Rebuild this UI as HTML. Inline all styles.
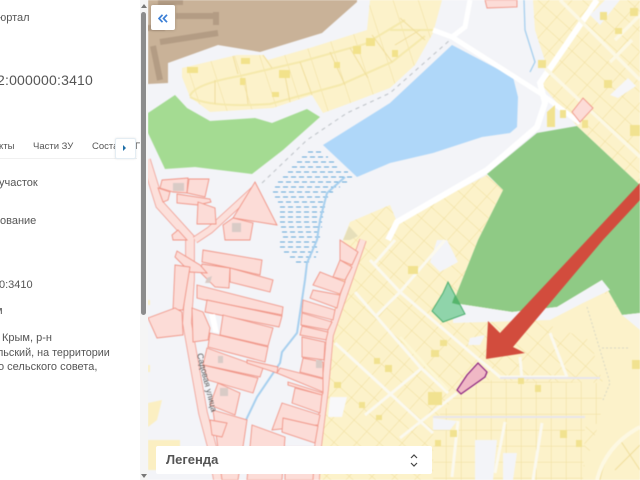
<!DOCTYPE html>
<html><head><meta charset="utf-8">
<style>
html,body{margin:0;padding:0;width:640px;height:480px;overflow:hidden;background:#fff;font-family:"Liberation Sans","Noto Sans CJK SC",sans-serif}
#map{position:absolute;left:0;top:0;filter:blur(.5px)}
#panel{position:absolute;left:0;top:0;width:140px;height:480px;background:#fff;overflow:hidden;filter:blur(.35px);color:#555}
.t{position:absolute;white-space:nowrap;font-size:11px;line-height:14px}
#sb{position:absolute;left:140px;top:0;width:8px;height:480px;background:#f5f5f5}
#th{position:absolute;left:141px;top:12px;width:5px;height:303px;background:#8c8c8c;border-radius:3px}
.ar{position:absolute;left:141px;width:0;height:0;border-left:3px solid transparent;border-right:3px solid transparent}
#back{position:absolute;left:151px;top:5px;width:24px;height:25px;background:#fff;box-shadow:0 0 3px rgba(0,0,0,.2);border-radius:2px}
#tabbtn{position:absolute;left:115px;top:138px;width:19px;height:19px;background:#fff;border:1px solid #e4edf3;border-radius:2px;box-shadow:0 0 2px rgba(0,0,0,.1)}
#leg{position:absolute;left:156px;top:446px;width:276px;height:28px;background:#fff;border-radius:2px;filter:blur(.3px)}
</style></head><body>
<svg id="map" width="640" height="480" viewBox="0 0 640 480" xmlns="http://www.w3.org/2000/svg">
<defs>
<pattern id="g1" width="17" height="15" patternUnits="userSpaceOnUse" patternTransform="rotate(42)"><rect width="17" height="15" fill="#fcf2ca"/><path d="M0 0H17M0 0V15" stroke="#f0de9d" stroke-width="1" fill="none"/></pattern>
<pattern id="g2" width="15" height="16" patternUnits="userSpaceOnUse" patternTransform="translate(461 398)"><rect width="15" height="16" fill="#fcf2ca"/><path d="M0 0H15M0 0V16" stroke="#f0de9d" stroke-width="1" fill="none"/></pattern>
<pattern id="g3" width="24" height="30" patternUnits="userSpaceOnUse" patternTransform="rotate(-18 200 80)"><rect width="24" height="30" fill="#fcf2ca"/><path d="M0 0V30" stroke="#f0de9d" stroke-width="1" fill="none"/></pattern>
</defs>
<rect width="640" height="480" fill="#f3f4f8"/>
<polygon points="148,0 357,0 357,2 322,33 260,52 218,45 168,63 168,83 148,84" fill="#c9b298"/>
<path d="M158 2H183M176 16H216M216 12V25M160 42L218 33M146 28H165M153 46L160 80" stroke="#b39c84" stroke-width="6" fill="none"/>
<polygon points="148,113 175,95 187,108 210,121 255,118 272,123 307,109 320,117 283,150 252,174 195,167 165,169 148,133" fill="#a4db92"/>
<polygon points="323,145 390,103 452,45 513,77 518,97 517,127 510,133 482,137 433,153 390,163 357,177" fill="#afd7f9"/>
<polygon points="487,174 537,133 577,126 640,185 640,313 622,315 602,280 557,307 512,312 453,303 458,290 478,240 503,190" fill="#8fca85"/>
<polygon points="182,68 237,55 263,55 268,60 313,47 367,30 370,0 442,0 433,33 415,65 390,88 345,105 323,113 312,95 273,108 210,112 190,97 182,77" fill="url(#g3)"/>
<path d="M190 96Q194 84 240 76L300 62L365 44L405 20M190 97Q210 108 270 104L340 85L392 62L425 36M390 30H433" stroke="#f5e9ac" stroke-width="2" fill="none"/>
<path d="M233 56L238 74M263 55L272 68M215 80V104M245 78L248 104M284 70L290 102M300 62L312 95M330 52L345 85M350 48L368 78M372 35L392 62M400 18L425 40M395 45L420 30" stroke="#f0de9d" stroke-width="1" fill="none"/>
<path d="M187 67H198V73H187ZM241 58H250V64H241ZM279 70H290V78H279ZM240 78H245V85H240ZM272 92H279V97H272ZM334 62H340V68H334ZM353 46H361V54H353ZM366 38H375V46H366ZM392 50H398V57H392Z" fill="#f2e28b"/>
<polygon points="533,0 640,0 640,185 577,126 540,83 547,67 535,30" fill="url(#g1)"/>
<polygon points="343,240 350,222 390,205 397,222 487,175 503,190 478,240 458,290 453,303 512,312 557,307 602,280 622,315 640,313 640,480 318,480 327,400 330,340 337,290 345,255" fill="url(#g1)"/>
<polygon points="535,320 583,303 602,290 622,315 640,330 640,480 580,480 600,420 603,383 590,340" fill="#fcf2ca"/>
<path d="M600 480Q606 445 640 427M615 470L640 445M620 440L640 470" stroke="#f0de9d" stroke-width="1" fill="none"/>
<polygon points="445,410 457,392 487,380 603,383 600,423 585,427 583,480 433,480 433,420" fill="url(#g2)"/>
<path d="M453 303L512 312L557 307L602 280L610 290L583 303L550 320L487 322L453 323Z" fill="#f3f4f8"/>
<path d="M622 315L640 313V330Z" fill="#f3f4f8"/>
<path d="M437 240L447 240L458 262L440 272L430 262Z" fill="#f3f4f8"/>
<path d="M470 338L485 335L480 345L468 345Z" fill="#f3f4f8"/>
<path d="M330 397H347L342 417H328Z" fill="#f8f8fa"/>
<path d="M433 418L457 421L450 430H433ZM475 440H497L493 480H475ZM503 453H517L513 480H503Z" fill="#f3f4f8"/>
<path d="M597 0L540 83L545 103L537 127L487 170L397 222L388 240" stroke="#fff" stroke-width="6" fill="none"/>
<path d="M470 0L465 27L452 37L433 30M452 37L540 93L580 123" stroke="#fff" stroke-width="5" fill="none"/>
<path d="M560 0L640 80M545 68L640 157M632 40L610 62M640 15L615 40" stroke="#fcf8e4" stroke-width="3.5" fill="none"/>
<path d="M605 0H620L600 25L590 15Z" fill="#f3f4f8"/>
<path d="M610 95L628 78L636 86L618 98Z" fill="#f6f6f9"/>
<path d="M355 292L420 367L448 393M377 315L400 292L445 240M370 260L400 292L477 358L487 366L500 377H567M375 263L395 240M365 415L422 368M400 438L457 393M458 421L452 477M505 422L495 473M542 423L533 480M550 333L567 377M520 357L522 380M335 343L383 387L433 433" stroke="#fbf9ef" stroke-width="3" fill="none"/>
<path d="M400 337L448 390" stroke="#fdf7d4" stroke-width="3" fill="none"/>
<path d="M597 480Q606 445 640 427" stroke="#fdf8e2" stroke-width="4" fill="none"/>
<path d="M587 307L610 383L603 400M602 348H630" stroke="#d9d8c4" stroke-width="1" stroke-dasharray="2 2" fill="none"/>
<path d="M433 417H585M500 378H600" stroke="#e8e6ec" stroke-width="2" fill="none"/>
<path d="M408 266H418V274H408ZM440 340H447V346H440ZM431 350H439V357H431ZM374 358H380V364H374ZM385 365H392V372H385ZM334 382H341V388H334ZM359 402H365V408H359ZM376 415H382V420H376ZM428 392H442V405H428ZM518 378H524V384H518ZM535 385H541V392H535ZM632 360H640V369H632ZM560 430H567V438H560ZM576 440H582V447H576ZM450 430H457V437H450ZM435 440H441V446H435ZM538 60H546V68H538ZM582 120H588V128H582ZM604 80H612V88H604ZM600 12H607V20H600ZM630 8H638V16H630ZM615 28H622V34H615ZM560 110H566V118H560ZM630 125H640V136H630ZM547 112L555 105V127H547Z" fill="#f1e290"/>
<path d="M148 403L162 400L157 420L148 427ZM148 440H180V447H157V470H148ZM148 300H150V305H148ZM148 365H150V372H148Z" fill="#fbefc2"/>
<g fill="none" stroke="#5fa6d8" stroke-width="1" stroke-dasharray="5 3">
<path d="M308 152H322M302 157H328M297 162H334M292 167H340M288 172H348M283 177H354M278 182H348M275 187H340M273 192H333M275 197H328M278 202H325M280 207H325M280 212H324M280 217H323M280 222H322M281 227H322M282 232H320M283 237H320M280 242H320M280 247H320M284 252H318M290 257H316M296 262H310"/>
</g>
<path d="M345 177L327 193L320 220L317 240L307 263L305 280L297 333L282 352L280 363L257 397L235 443" stroke="#a6cfee" stroke-width="2" fill="none"/>
<path d="M524 0L525 30L535 62L530 72" stroke="#a6cfee" stroke-width="1.3" fill="none"/>
<path d="M262 183L307 140L347 113L390 93L450 40" stroke="#bcc1c6" stroke-width="1" stroke-dasharray="4 4" fill="none"/>
<path d="M146 160L160 205L190 238L190 280L187 323L203 413L212 447L218 480" stroke="#f09a8e" stroke-width="9.5" fill="none"/>
<path d="M146 160L160 205L190 238L190 280L187 323L203 413L212 447L218 480" stroke="#fce0db" stroke-width="8" fill="none"/>
<path d="M257 187L210 230L195 240" stroke="#f09a8e" stroke-width="7.5" fill="none"/>
<path d="M257 187L210 230L195 240" stroke="#fce0db" stroke-width="6" fill="none"/>
<path d="M363 240L343 297L330 335L325 390L318 447L316 480" stroke="#f09a8e" stroke-width="7.5" fill="none"/>
<path d="M363 240L343 297L330 335L325 390L318 447L316 480" stroke="#fce0db" stroke-width="6" fill="none"/>
<g fill="#fcdcd7" stroke="#f09587" stroke-width=".9">
<polygon points="255,182 277,225 233,218"/>
<polygon points="162,180 188,178 187,193 173,192 160,188"/>
<polygon points="189,179 209,179 205,197 187,193"/>
<polygon points="177,194 210,199 211,202 198,205 177,203"/>
<polygon points="198,202 215,208 216,224 197,224"/>
<polygon points="158,188 170,192 168,200 163,202"/>
<polygon points="223,225 233,218 253,223 250,240 225,240"/>
<polygon points="172,235 178,230 187,240 173,240"/>
<polygon points="203,250 262,260 260,275 230,268 202,262"/>
<polygon points="230,268 273,280 270,292 230,282"/>
<polygon points="202,264 230,268 229,288 215,287 200,272"/>
<polygon points="177,251 200,265 207,273 190,272 175,257"/>
<polygon points="175,265 190,267 183,310 173,310"/>
<polygon points="148,318 175,308 182,312 183,335 157,338"/>
<polygon points="197,285 283,307 282,315 205,300 197,298"/>
<polygon points="207,300 282,316 279,327 205,312"/>
<polygon points="223,315 273,328 268,346 220,335"/>
<polygon points="210,333 268,347 265,362 208,347"/>
<polygon points="192,308 203,312 210,328 208,340 193,342"/>
<polygon points="207,348 263,368 260,377 203,365"/>
<polygon points="203,365 258,378 253,393 208,380"/>
<polygon points="247,360 278,367 277,373 247,363"/>
<polygon points="280,368 323,379 323,392 277,373"/>
<polygon points="288,382 323,393 322,395 288,385"/>
<polygon points="295,388 322,395 320,413 292,403"/>
<polygon points="282,403 320,415 318,425 272,430"/>
<polygon points="283,418 318,426 315,443 282,432"/>
<polygon points="252,425 285,437 282,480 247,480"/>
<polygon points="218,383 240,393 235,415 210,405"/>
<polygon points="213,410 247,420 238,480 222,480"/>
<polygon points="210,420 227,423 222,437 212,435"/>
<polygon points="313,285 320,272 345,282 340,294"/>
<polygon points="310,298 313,290 340,295 337,308"/>
<polygon points="303,300 335,310 333,320 302,312"/>
<polygon points="302,313 332,322 328,330 301,325"/>
<polygon points="302,326 328,332 326,340 300,335"/>
<polygon points="302,337 325,342 324,360 302,357"/>
<polygon points="303,358 323,362 323,378 300,372"/>
<polygon points="340,240 358,252 352,265 340,260"/>
<polygon points="340,260 352,267 345,280 333,277"/>
<polygon points="485,0 517,0 517,7 487,8"/>
<polygon points="572,112 583,98 593,108 580,122"/>
<polygon points="285,447 315,447 313,480 285,480"/>
</g>
<path d="M173 183H184V191H173ZM232 223H241V232H232ZM207 278L212 276L210 283H205ZM218 356H223V363H218ZM316 360H322V368H316ZM220 388H228V396H220Z" fill="#d9cbc6"/>
<path d="M209 314L215 314L219 333L213 332Z" fill="#fff"/>
<path d="M349 226L358 236L350 240H343Z" fill="#e6dfba"/>
<text transform="translate(197,354) rotate(76)" font-size="8.5" fill="#555" font-family="Liberation Sans, sans-serif">Садовая улица</text>
<polygon points="448,282 465,314 443,322 432,311 443,293" fill="#8fd4aa" stroke="#4cae70" stroke-width="1"/>
<polygon points="455,295 460,305 452,303" fill="#55b56c"/>
<polygon points="478,363 487,372 485,377 461,394 457,390 467,375" fill="#f0b8c5" stroke="#8a2080" stroke-width="1.2"/>
<polygon points="640,183 640,200 603,240 513,347 525,353 486,359 488,321 500,333 587,240" fill="#d24c3d"/>
</svg>
<div id="panel">
<div class="t" style="left:-2px;top:11px">юртал</div>
<div class="t" style="left:-3px;top:72px;font-size:14px;line-height:16px;letter-spacing:.2px">2:000000:3410</div>
<div class="t" style="left:-1px;top:140px;font-size:9.5px">кты</div>
<div class="t" style="left:33px;top:140px;font-size:9.5px">Части ЗУ</div>
<div class="t" style="left:92px;top:140px;font-size:9.5px">Соста</div>
<div style="position:absolute;left:0;top:158px;width:137px;height:1px;background:#f0f0f0"></div>
<div class="t" style="left:-1px;top:176px">участок</div>
<div class="t" style="left:0;top:214px">ование</div>
<div class="t" style="left:-1px;top:278px">0:3410</div>
<div class="t" style="left:-5px;top:304px">м</div>
<div class="t" style="left:2px;top:331px">Крым, р-н</div>
<div class="t" style="left:-3px;top:346px;font-size:10.8px">льский, на территории</div>
<div class="t" style="left:-2px;top:360px">о сельского совета,</div>
</div>
<div style="position:absolute;left:135px;top:141px;color:#555;font-size:9.5px;filter:blur(.35px)">Г</div>
<div id="tabbtn"><div style="position:absolute;left:7px;top:6px;width:0;height:0;border-top:3px solid transparent;border-bottom:3px solid transparent;border-left:3px solid #1f6fa8"></div></div>
<div id="sb"></div><div id="th"></div>
<div class="ar" style="top:4px;border-bottom:4px solid #777"></div>
<div class="ar" style="top:474px;border-top:4px solid #777"></div>
<div id="back"><svg style="position:absolute;left:7px;top:9px" width="10" height="9" viewBox="0 0 10 9"><path d="M4.5 .8L1 4.5L4.5 8.2M9 .8L5.5 4.5L9 8.2" fill="none" stroke="#3b7fd6" stroke-width="1.7"/></svg></div>
<div id="leg">
<div style="position:absolute;left:10px;top:6px;font-size:13px;line-height:16px;font-weight:bold;color:#555">Легенда</div>
<svg style="position:absolute;left:253px;top:7px" width="10" height="15" viewBox="0 0 10 15"><path d="M2 5L5 2L8 5M2 10L5 13L8 10" fill="none" stroke="#444" stroke-width="1.2"/></svg>
</div>
</body></html>
